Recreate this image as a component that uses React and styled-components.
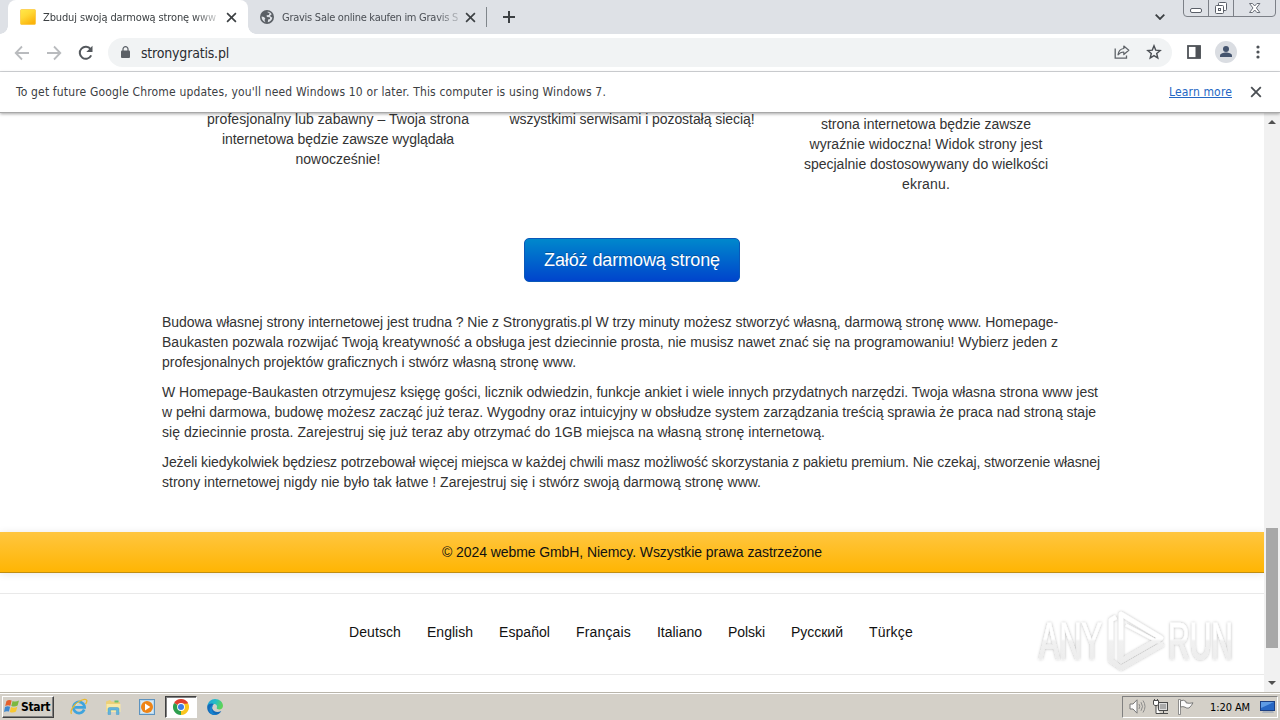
import React, { useLayoutEffect, useRef, useState } from "react";
import styled, { createGlobalStyle, css } from "styled-components";

const GlobalStyle = createGlobalStyle`
  * {
    box-sizing: border-box;
  }
  body {
    margin: 0;
    overflow: hidden;
    background: #fff;
  }
`;

// Spreads one line of text over the given width with letter spacing
const Fit = ({ width, children }) => {
  const ref = useRef(null);
  const [spacing, setSpacing] = useState(0);

  useLayoutEffect(() => {
    const natural = ref.current.getBoundingClientRect().width;
    setSpacing((width - natural) / children.length);
  }, [width, children]);

  return (
    <FitText ref={ref} style={{ letterSpacing: `${spacing}px` }}>
      {children}
    </FitText>
  );
};

const Cross = ({ size = 10, color = "#3c4043", weight = 1.5 }) => (
  <svg width={size} height={size} viewBox="0 0 10 10">
    <path d="M1 1l8 8M9 1L1 9" stroke={color} strokeWidth={weight} fill="none" />
  </svg>
);

const YellowIcon = () => (
  <svg width="16" height="16" viewBox="0 0 16 16">
    <defs>
      <linearGradient id="fav" x1="0" y1="0" x2="0.6" y2="1">
        <stop offset="0" stopColor="#ffe84a" />
        <stop offset="0.45" stopColor="#ffd936" />
        <stop offset="1" stopColor="#fbb40c" />
      </linearGradient>
    </defs>
    <rect x="0.5" y="0.5" width="15" height="15" rx="1" fill="url(#fav)" stroke="#fbc02a" strokeOpacity="0.6" />
  </svg>
);

const GlobeIcon = () => (
  <svg width="14" height="14" viewBox="0 0 14 14">
    <circle cx="7" cy="7" r="7" fill="#5b6066" />
    <path d="M6.2 1.7C7.4 1.2 8 1.5 7.6 2.6L9.6 3 8.9 5 6.6 5.2 6.9 6.9 9.8 7.3 10.1 9 8.1 9.6 7.8 12.2C9.8 12 11.9 10.3 12.4 7.5L11 7.1 10 5.7 11.7 4.3C10.6 2.5 8.4 1.3 6.2 1.7z" fill="#dee1e6" />
    <path d="M1.6 6.6L4 6.9 5.3 8.5 4.5 10 5.4 12.2C3 11.5 1.3 9.2 1.6 6.6z" fill="#dee1e6" />
  </svg>
);

const ArrowIcon = ({ right }) => (
  <svg width="16" height="16" viewBox="0 0 16 16">
    <path
      d={right ? "M1 8h13M8 1.5L14.3 8 8 14.5" : "M15 8H2M8 1.5L1.7 8 8 14.5"}
      stroke="#b9bbbe"
      strokeWidth="1.8"
      fill="none"
    />
  </svg>
);

const ReloadIcon = () => (
  <svg width="16" height="16" viewBox="0 0 16 16">
    <path d="M13.2 10.4A6 6 0 1 1 12.6 4.2" stroke="#54585d" strokeWidth="2" fill="none" />
    <path d="M14.5 0.8v6.2H8.3z" fill="#54585d" />
  </svg>
);

const LockIcon = () => (
  <svg width="9" height="14" viewBox="0 0 9 14">
    <rect x="0" y="4.5" width="9" height="7.5" rx="1" fill="#5b6066" />
    <path d="M2 5V3a2.5 2.3 0 0 1 5 0v2" stroke="#5b6066" strokeWidth="1.2" fill="none" />
  </svg>
);

const ShareIcon = () => (
  <svg width="16" height="16" viewBox="0 0 16 16">
    <path d="M1.2 3.5v9.7h11.3v-2.6" stroke="#5f6368" strokeWidth="1.3" fill="none" />
    <path d="M9.8 1l5 4.3-5 4.2V7C7.3 7 5.4 8 4 9.8 4.4 6.4 6.3 4 9.8 3.5z" stroke="#5f6368" strokeWidth="1.2" fill="none" strokeLinejoin="round" />
  </svg>
);

const StarIcon = () => (
  <svg width="16" height="17" viewBox="0 0 16 17">
    <path d="M8 1.8l1.7 4.3 4.5.4-3.5 3 1.1 4.5L8 11.6 4.2 14l1.1-4.5-3.5-3 4.5-.4z" stroke="#4b4f54" strokeWidth="1.4" fill="none" />
  </svg>
);

const PanelIcon = () => (
  <svg width="14" height="16" viewBox="0 0 14 16">
    <rect x="1" y="1" width="12" height="12" stroke="#4e5257" strokeWidth="1.8" fill="none" />
    <rect x="8.5" y="1" width="5" height="12" fill="#4e5257" />
  </svg>
);

const PersonIcon = () => (
  <svg width="22" height="24" viewBox="0 0 22 24">
    <circle cx="11" cy="11" r="11" fill="#dadde2" />
    <circle cx="11" cy="8" r="3" fill="#44546e" />
    <path d="M5 16v-1.5c0-2 3.5-3 6-3s6 1 6 3V16z" fill="#44546e" />
  </svg>
);

const DotsIcon = () => (
  <svg width="4" height="15" viewBox="0 0 4 15">
    <circle cx="2" cy="2" r="1.6" fill="#4e5257" />
    <circle cx="2" cy="7" r="1.6" fill="#4e5257" />
    <circle cx="2" cy="12" r="1.6" fill="#4e5257" />
  </svg>
);

const WindowButtons = () => (
  <svg width="94" height="17" viewBox="0 0 94 17">
    <path d="M0.5 0v13q0 3.5 3.5 3.5h85q3.5 0 3.5-3.5V0M25.5 0v16M50.5 0v16" stroke="#7c8087" fill="none" />
    <rect x="7.5" y="8.5" width="11" height="4" rx="1.5" fill="#fff" stroke="#5a5f68" />
    <rect x="35.5" y="2.5" width="8" height="8" rx="1" fill="#fff" stroke="#5a5f68" />
    <rect x="32.5" y="5.5" width="8" height="8" rx="1" fill="#fff" stroke="#5a5f68" />
    <rect x="35.5" y="8.5" width="2" height="2" fill="#fff" stroke="#5a5f68" />
    <path d="M66.5 3.5h3l2.2 2.5 2.2-2.5h3L73.4 8l3.5 4.5h-3L71.7 10l-2.2 2.5h-3L70 8z" fill="#fff" stroke="#6a6f78" />
  </svg>
);

const StartLogo = () => (
  <svg width="16" height="15" viewBox="0 0 16 15">
    <path d="M2.5 2Q5 0.3 7.6 1.6L6.4 6.7Q3.8 5.6 1.2 7z" fill="#e5602c" />
    <path d="M8.6 2Q11.5 3.3 15 1.6L13.6 6.6Q10.5 8.3 7.3 7z" fill="#7cb841" />
    <path d="M1 8Q3.5 6.6 6.1 7.8L4.9 12.6Q2.5 11.6 0 13z" fill="#3f88cf" />
    <path d="M7 8.1Q10 9.4 13.3 7.7L12 12.5Q9 14.2 5.8 12.9z" fill="#f8c832" />
  </svg>
);

const IEIcon = () => (
  <svg width="18" height="18" viewBox="0 0 18 18">
    <path d="M14.2 11.6A5.6 5.6 0 1 1 14.6 9.4H5" stroke="#3fa4dd" strokeWidth="2.7" fill="none" />
    <path d="M1.5 15.8C-.5 13 4 6.5 9.5 3.3 13 1.2 16.5.6 16.8 2.5c.2 1-.4 2.4-1.3 3.6" stroke="#e9b92f" strokeWidth="1.3" fill="none" />
    <path d="M5.5 8.2Q6.4 5.3 9.3 5" stroke="#b8e4f8" strokeWidth="1" fill="none" />
  </svg>
);

const FolderIcon = () => (
  <svg width="17" height="16" viewBox="0 0 17 16">
    <path d="M1 2.5L5 1l1.5 1.5L15 3v9H1z" fill="#ecd079" />
    <path d="M1.5 5h14v8h-14z" fill="#f8e9a6" />
    <path d="M9.5 1.5h4v2h-4z" fill="#6cc06c" />
    <path d="M3 15.5V10q0-1.5 1.5-1.5h8Q14 8.5 14 10v5.5h-2.6V11H5.6v4.5z" fill="#62b4dc" stroke="#489cc8" strokeWidth="0.5" />
  </svg>
);

const PlayerIcon = () => (
  <svg width="16" height="16" viewBox="0 0 16 16">
    <rect x="0.5" y="0.5" width="15" height="15" fill="#b9d8ee" stroke="#5d93bf" />
    <rect x="2" y="2" width="12" height="12" fill="#d8eaf5" />
    <circle cx="8" cy="8" r="6" fill="#ee8416" />
    <path d="M6 4.5L11.3 8 6 11.5z" fill="#fff" />
  </svg>
);

const ChromeIcon = () => (
  <svg width="16" height="16" viewBox="0 0 16 16">
    <path d="M8 8L1.07 4A8 8 0 0 1 14.93 4z" fill="#e0402f" />
    <path d="M8 8L14.93 4A8 8 0 0 1 8 16z" fill="#fac51d" />
    <path d="M8 8L8 16A8 8 0 0 1 1.07 4z" fill="#2e9f4e" />
    <path d="M8 4.4h6.7L11 10z" fill="#fac51d" />
    <path d="M8 4.4h6.8L14.2 3H6z" fill="#e0402f" />
    <circle cx="8" cy="8" r="3.9" fill="#fff" />
    <circle cx="8" cy="8" r="3" fill="#3c7de6" />
  </svg>
);

const EdgeIcon = () => (
  <svg width="16" height="16" viewBox="0 0 16 16">
    <defs>
      <linearGradient id="edge" x1="0" y1="0" x2="1" y2="0.3">
        <stop offset="0" stopColor="#219fdc" />
        <stop offset="0.55" stopColor="#25bdc7" />
        <stop offset="1" stopColor="#5cd35a" />
      </linearGradient>
    </defs>
    <path d="M0.3 7C1 3 4 0 8 0c4.5 0 8 3.2 8 6.7 0 2.3-1.6 3.7-3.7 3.7-1.7 0-2.8-.6-2.6-1.3.8-1.5.2-4-2.7-4-3 0-5.5 1.5-6.7 1.9z" fill="url(#edge)" />
    <path d="M0.3 7C2 4.5 5 4 7 5.2 5 6 4.8 8 5.3 9.6c1 3 4.7 4.5 9 2.5C13 14.6 10.5 16 8 16 3 16-.5 12 .3 7z" fill="#146bb8" />
    <path d="M5 9c-.5 3 1.5 6 5 6.6C5 16.8 2 13.5 2.5 10.5 2.7 9 3.5 7 6 6z" fill="#1684d0" />
  </svg>
);

const SpeakerIcon = () => (
  <svg width="17" height="15" viewBox="0 0 17 15">
    <path d="M1 5h3l4-4.2v13.4L4 10H1z" fill="#fbfbfb" stroke="#777" />
    <path d="M10 5q1.5 2.5 0 5M12 3.2q3 4.3 0 8.6M14 1.5q4 6 0 12" stroke="#858585" fill="none" strokeWidth="0.9" />
  </svg>
);

const NetworkIcon = () => (
  <svg width="17" height="16" viewBox="0 0 17 16">
    <rect x="5.5" y="3.5" width="9" height="8" fill="#ddd" stroke="#4a4a4a" />
    <rect x="7" y="5" width="6" height="5" fill="#aaa" />
    <path d="M6 14.5h9M10.5 12v2" stroke="#4a4a4a" />
    <path d="M0.5 1.5h5v4l-1.5 1H2l-1.5-1zM3 6.5V14.5h4" fill="#fff" stroke="#4a4a4a" />
    <path d="M1.5 0v2M4.5 0v2" stroke="#4a4a4a" />
  </svg>
);

const FlagIcon = () => (
  <svg width="17" height="16" viewBox="0 0 17 16">
    <path d="M1.5 0.5h2v15h-2z" fill="#fff" stroke="#777" strokeWidth="0.8" />
    <path d="M3.5 1.8q3-1.5 5.5.7v1.3q3 1 7 0-1.5 3-4 5.2-2.2.6-4-.8-2-1.1-4.5-.2z" fill="#fcfcfc" stroke="#6e6e6e" strokeWidth="0.9" />
  </svg>
);

const DesktopIcon = () => (
  <svg width="16" height="12" viewBox="0 0 16 12">
    <rect x="0.5" y="0.5" width="14" height="9" fill="#2767c4" stroke="#1c3f82" />
    <path d="M1 1h13L1 7z" fill="#5e9be4" />
    <path d="M2 12h12l-1-2H3z" fill="#aeb4bc" />
  </svg>
);

const Watermark = () => (
  <WatermarkBox>
    <svg width="220" height="76" viewBox="0 0 220 76">
      <defs>
        <linearGradient id="wm" gradientUnits="userSpaceOnUse" x1="0" y1="8" x2="0" y2="66">
          <stop offset="0.48" stopColor="#ffffff" />
          <stop offset="0.52" stopColor="#f1f1f1" />
          <stop offset="1" stopColor="#ebebeb" />
        </linearGradient>
        <filter id="wmShadow" x="-10%" y="-10%" width="120%" height="120%">
          <feDropShadow dx="0" dy="0" stdDeviation="1.6" floodColor="#000" floodOpacity="0.3" />
        </filter>
      </defs>
      <g filter="url(#wmShadow)" fill="url(#wm)">
        <WatermarkText x="5" y="56" textLength="63" lengthAdjust="spacingAndGlyphs">ANY</WatermarkText>
        <WatermarkText x="134" y="56" textLength="65" lengthAdjust="spacingAndGlyphs">RUN</WatermarkText>
        <g fill="none" stroke="url(#wm)" strokeWidth="4.5" strokeLinejoin="round">
          <path d="M87 11L127 35 87 58z" />
          <path d="M82 14L77 17V58L87 65 129 41" />
          <path d="M92 22L126 40" strokeWidth="3" />
        </g>
      </g>
    </svg>
  </WatermarkBox>
);

const languages = [
  ["Deutsch", 52],
  ["English", 46],
  ["Español", 51],
  ["Français", 55],
  ["Italiano", 45],
  ["Polski", 37],
  ["Русский", 52],
  ["Türkçe", 44],
];

const paragraphs = [
  [
    ["Budowa własnej strony internetowej jest trudna ? Nie z Stronygratis.pl W trzy minuty możesz stworzyć własną, darmową stronę www. Homepage-", 896],
    ["Baukasten pozwala rozwijać Twoją kreatywność a obsługa jest dziecinnie prosta, nie musisz nawet znać się na programowaniu! Wybierz jeden z", 896],
    ["profesjonalnych projektów graficznych i stwórz własną stronę www.", 414],
  ],
  [
    ["W Homepage-Baukasten otrzymujesz księgę gości, licznik odwiedzin, funkcje ankiet i wiele innych przydatnych narzędzi. Twoja własna strona www jest", 936],
    ["w pełni darmowa, budowę możesz zacząć już teraz. Wygodny oraz intuicyjny w obsłudze system zarządzania treścią sprawia że praca nad stroną staje", 934],
    ["się dziecinnie prosta. Zarejestruj się już teraz aby otrzymać do 1GB miejsca na własną stronę internetową.", 663],
  ],
  [
    ["Jeżeli kiedykolwiek będziesz potrzebował więcej miejsca w każdej chwili masz możliwość skorzystania z pakietu premium. Nie czekaj, stworzenie własnej", 938],
    ["strony internetowej nigdy nie było tak łatwe ! Zarejestruj się i stwórz swoją darmową stronę www.", 599],
  ],
];

const features = [
  {
    lines: [
      ["profesjonalny lub zabawny – Twoja strona", 262],
      ["internetowa będzie zawsze wyglądała", 232],
      ["nowocześnie!", 85],
    ],
  },
  { lines: [["wszystkimi serwisami i pozostałą siecią!", 245]] },
  {
    low: true,
    lines: [
      ["strona internetowa będzie zawsze", 210],
      ["wyraźnie widoczna! Widok strony jest", 233],
      ["specjalnie dostosowywany do wielkości", 244],
      ["ekranu.", 48],
    ],
  },
];

const App = () => {
  return (
    <Screen>
      <GlobalStyle />
      <TabStrip>
        <Tab $active>
          <YellowIcon />
          <TabTitle $active>
            <Fit width={173}>Zbuduj swoją darmową stronę www</Fit>
          </TabTitle>
          <Cross size={11} />
        </Tab>
        <Tab>
          <GlobeIcon />
          <TabTitle>
            <Fit width={176}>Gravis Sale online kaufen im Gravis S</Fit>
          </TabTitle>
          <Cross size={11} />
        </Tab>
        <TabDivider />
        <svg width="12" height="12" viewBox="0 0 12 12">
          <path d="M6 0v12M0 6h12" stroke="#3c4043" strokeWidth="2" />
        </svg>
        <Spacer />
        <Chevron width="10" height="6" viewBox="0 0 10 6">
          <path d="M0.7 0.7L5 5 9.3 0.7" stroke="#3c4043" strokeWidth="1.8" fill="none" />
        </Chevron>
        <Caption>
          <WindowButtons />
        </Caption>
      </TabStrip>

      <Toolbar>
        <Nav>
          <ArrowIcon />
          <ArrowIcon right />
          <ReloadIcon />
        </Nav>
        <AddressBar>
          <LockIcon />
          <Url>
            <Fit width={88}>stronygratis.pl</Fit>
          </Url>
          <Spacer />
          <ShareIcon />
          <StarIcon />
        </AddressBar>
        <Actions>
          <PanelIcon />
          <PersonIcon />
          <DotsIcon />
        </Actions>
      </Toolbar>

      <InfoBar>
        <Fit width={590}>
          To get future Google Chrome updates, you'll need Windows 10 or later. This computer is using Windows 7.
        </Fit>
        <Spacer />
        <LearnMore>
          <Fit width={63}>Learn more</Fit>
        </LearnMore>
        <Cross size={12} color="#4a4e53" />
      </InfoBar>

      <Viewport>
        <Page>
          <Features>
            {features.map((feature, i) => (
              <Feature key={i} $low={feature.low}>
                {feature.lines.map(([text, width]) => (
                  <Line key={text}>
                    <Fit width={width}>{text}</Fit>
                  </Line>
                ))}
              </Feature>
            ))}
          </Features>
          <BlueButton>
            <Fit width={176}>Załóż darmową stronę</Fit>
          </BlueButton>
          <Article>
            {paragraphs.map((lines, i) => (
              <Paragraph key={i}>
                {lines.map(([text, width]) => (
                  <Line key={text}>
                    <Fit width={width}>{text}</Fit>
                  </Line>
                ))}
              </Paragraph>
            ))}
          </Article>
          <Copyright>
            <Fit width={380}>© 2024 webme GmbH, Niemcy. Wszystkie prawa zastrzeżone</Fit>
          </Copyright>
          <Languages>
            {languages.map(([name, width]) => (
              <Fit key={name} width={width}>
                {name}
              </Fit>
            ))}
          </Languages>
        </Page>
        <Scrollbar>
          <ScrollArrow $up />
          <ScrollThumb />
          <ScrollArrow />
        </Scrollbar>
        <Watermark />
      </Viewport>

      <Taskbar>
        <StartButton>
          <StartLogo />
          <Fit width={29}>Start</Fit>
        </StartButton>
        <QuickLaunch>
          <TaskItem><IEIcon /></TaskItem>
          <TaskItem><FolderIcon /></TaskItem>
          <TaskItem><PlayerIcon /></TaskItem>
          <TaskItem $pressed><ChromeIcon /></TaskItem>
          <TaskItem><EdgeIcon /></TaskItem>
        </QuickLaunch>
        <Spacer />
        <Tray>
          <SpeakerIcon />
          <NetworkIcon />
          <FlagIcon />
          <Clock>
            <Fit width={40}>1:20 AM</Fit>
          </Clock>
          <DesktopIcon />
        </Tray>
      </Taskbar>
    </Screen>
  );
};

export default App;

const FitText = styled.span`
  display: inline-block;
  white-space: pre;
  text-decoration: inherit;
`;

const Spacer = styled.div`
  flex: 1;
`;

const Screen = styled.div`
  display: flex;
  flex-direction: column;
  width: 1280px;
  height: 720px;
  overflow: hidden;
  background: #fff;
  font-family: "DejaVu Sans Condensed", "DejaVu Sans", sans-serif;
  font-stretch: condensed;

  svg {
    display: block;
    flex: none;
  }
`;

const TabStrip = styled.div`
  display: flex;
  align-items: center;
  flex: none;
  height: 34px;
  padding-left: 8px;
  background: #dee1e6;
`;

const Tab = styled.div`
  position: relative;
  display: flex;
  align-items: center;
  width: 240px;
  height: 34px;
  padding: 0 12px;
  border-radius: 8px 8px 0 0;
  ${({ $active }) =>
    $active &&
    css`
      background: #fff;

      &::before,
      &::after {
        content: "";
        position: absolute;
        bottom: 0;
        width: 8px;
        height: 8px;
      }
      &::before {
        left: -8px;
        background: radial-gradient(circle at 0 0, #dee1e6 7.5px, #fff 8px);
      }
      &::after {
        right: -8px;
        background: radial-gradient(circle at 100% 0, #dee1e6 7.5px, #fff 8px);
      }
    `}
`;

const TabTitle = styled.div`
  flex: none;
  width: ${({ $active }) => ($active ? "175px" : "178px")};
  margin: 0 ${({ $active }) => ($active ? "8px 0 7px" : "5px 0 8px")};
  padding-top: 1px;
  font-size: 11px;
  line-height: 16px;
  color: ${({ $active }) => ($active ? "#3c4043" : "#4a4e54")};
  -webkit-mask-image: linear-gradient(90deg, #000 86%, rgba(0, 0, 0, 0.2));
  mask-image: linear-gradient(90deg, #000 86%, rgba(0, 0, 0, 0.2));
`;

const TabDivider = styled.div`
  width: 1px;
  height: 20px;
  margin: 0 16px 0 -2px;
  background: #80868b;
`;

const Chevron = styled.svg`
  margin-right: 18px;
`;

const Caption = styled.div`
  align-self: flex-start;
  width: 97px;
`;

const Toolbar = styled.div`
  display: flex;
  align-items: center;
  flex: none;
  height: 38px;
  padding: 0 20px 0 14px;
  border-bottom: 1px solid #d5d7da;
`;

const Nav = styled.div`
  display: flex;
  gap: 16px;
  width: 94px;
`;

const AddressBar = styled.div`
  display: flex;
  align-items: center;
  width: 1064px;
  height: 29px;
  padding: 0 10px 0 13px;
  border-radius: 15px;
  background: #f1f3f4;

  svg:last-child {
    margin-left: 16px;
  }
`;

const Url = styled.div`
  margin-left: 11px;
  font-size: 14px;
  color: #2a2c30;
`;

const Actions = styled.div`
  display: flex;
  align-items: center;
  margin-left: 15px;

  svg:nth-child(2) {
    margin: 0 19px 0 14px;
  }
`;

const InfoBar = styled.div`
  position: relative;
  z-index: 1;
  display: flex;
  align-items: center;
  flex: none;
  height: 41px;
  padding: 0 18px 1px 16px;
  border-bottom: 1px solid #a8a8a8;
  box-shadow: 0 1px 3px rgba(0, 0, 0, 0.35);
  background: #fff;
  font-size: 12px;
  color: #3c4043;
`;

const LearnMore = styled.a`
  margin-right: 18px;
  color: #2467c4;
  text-decoration: underline;
`;

const Viewport = styled.div`
  position: relative;
  display: flex;
  flex: 1;
  min-height: 0;
`;

const Page = styled.div`
  display: flex;
  flex-direction: column;
  align-items: center;
  width: 1264px;
  overflow: hidden;
  font-family: "Liberation Sans", Arial, sans-serif;
  font-stretch: normal;
  font-size: 14px;
  color: #333;
`;

const Line = styled.div`
  height: 20px;
  line-height: 20px;
  white-space: nowrap;
`;

const Features = styled.div`
  display: flex;
  flex: none;
  gap: 26px;
  height: 129px;
  margin-top: -4px;
`;

const Feature = styled.div`
  width: 268px;
  padding-top: ${({ $low }) => ($low ? "5px" : "0")};
  text-align: center;
`;

const BlueButton = styled.div`
  display: flex;
  align-items: center;
  justify-content: center;
  flex: none;
  width: 216px;
  height: 44px;
  border: 1px solid #0a58b8;
  border-radius: 5px;
  background: linear-gradient(#0088cc, #0044cc);
  font-size: 18px;
  color: #fff;
  text-shadow: 0 -1px 0 rgba(0, 0, 0, 0.25);
`;

const Article = styled.div`
  flex: none;
  width: 940px;
  height: 250px;
  padding-top: 30px;
`;

const Paragraph = styled.div`
  margin-bottom: 10px;
`;

const Copyright = styled.div`
  display: flex;
  align-items: center;
  justify-content: center;
  flex: none;
  width: 100%;
  height: 41px;
  border-bottom: 1px solid #c08d10;
  background: linear-gradient(#ffc640, #ffb503);
  box-shadow: 0 1px 8px rgba(0, 0, 0, 0.1);
  color: #111;
`;

const Languages = styled.div`
  display: flex;
  align-items: center;
  justify-content: center;
  flex: none;
  gap: 26px;
  width: 100%;
  height: 82px;
  margin-top: 20px;
  padding: 0 2px 4px 0;
  border-top: 1px solid #e9e9e9;
  border-bottom: 1px solid #e9e9e9;
  color: #111;
`;

const Scrollbar = styled.div`
  display: flex;
  flex-direction: column;
  align-items: center;
  justify-content: space-between;
  width: 16px;
  padding: 7px 0 7px;
  background: #f1f1f1;
`;

const ScrollArrow = styled.div`
  border: 4px solid transparent;
  ${({ $up }) =>
    $up
      ? css`
          border-top: 0;
          border-bottom-color: #505050;
        `
      : css`
          border-bottom: 0;
          border-top-color: #505050;
        `}
`;

const ScrollThumb = styled.div`
  width: 12px;
  height: 120px;
  margin-top: 370px;
  background: #a8a8a8;
`;

const WatermarkBox = styled.div`
  position: absolute;
  left: 1034px;
  top: 490px;
`;

const WatermarkText = styled.text`
  font-family: "Liberation Sans Narrow", "Liberation Sans", sans-serif;
  font-size: 51px;
  font-weight: normal;
  font-stretch: normal;
  stroke: url(#wm);
  stroke-width: 0.6px;
`;

const Taskbar = styled.div`
  display: flex;
  align-items: center;
  flex: none;
  height: 28px;
  padding: 0 2px;
  border-top: 1px solid #b9b5ab;
  background: #d4d0c8;
  box-shadow: inset 0 1px 0 #fff;
`;

const StartButton = styled.div`
  display: flex;
  align-items: center;
  gap: 1px;
  width: 52px;
  height: 22px;
  padding-left: 1px;
  border: 1px solid;
  border-color: #fff #404040 #404040 #fff;
  box-shadow: inset -1px -1px 0 #808080;
  font-size: 12px;
  font-weight: bold;
  color: #000;
`;

const QuickLaunch = styled.div`
  display: flex;
  gap: 2px;
  margin-left: 9px;
`;

const TaskItem = styled.div`
  display: flex;
  align-items: center;
  justify-content: center;
  width: 32px;
  height: 22px;
  ${({ $pressed }) =>
    $pressed &&
    css`
      border: 1px solid;
      border-color: #404040 #fff #fff #404040;
      background: #fff;
      box-shadow: inset 1px 1px 0 #808080;
    `}
`;

const Tray = styled.div`
  display: flex;
  align-items: center;
  gap: 7px;
  width: 156px;
  height: 22px;
  padding: 0 2px 0 6px;
  border: 1px solid;
  border-color: #808080 #fff #fff #808080;
`;

const Clock = styled.div`
  margin: 1px 3px 0 9px;
  font-size: 11px;
  color: #000;
`;
